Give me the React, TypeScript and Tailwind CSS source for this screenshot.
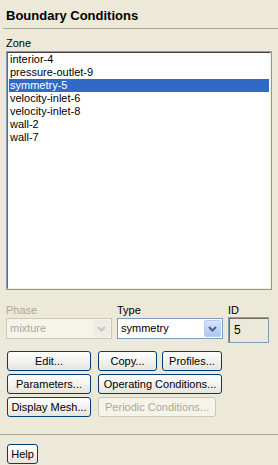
const zones = [
  "interior-4",
  "pressure-outlet-9",
  "symmetry-5",
  "velocity-inlet-6",
  "velocity-inlet-8",
  "wall-2",
  "wall-7",
];

function Chevron({ color }: { color: string }) {
  return (
    <svg width="9" height="6" viewBox="0 0 9 6">
      <path d="M1 1 L4.5 4.5 L8 1" fill="none" stroke={color} strokeWidth="2" />
    </svg>
  );
}

function Btn({
  label,
  w,
  disabled,
}: {
  label: string;
  w: string;
  disabled?: boolean;
}) {
  return (
    <div
      className={`${w} flex h-[20px] items-center justify-center rounded-[3px] border text-[11px] leading-none ${
        disabled
          ? "border-[#C9C7BA] bg-[#F5F4EA] text-[#ACA899]"
          : "border-[#003C74] bg-gradient-to-b from-white to-[#E6E5DE] text-black"
      }`}
    >
      {label}
    </div>
  );
}

export default function App() {
  return (
    <div
      className="flex h-[465px] w-[278px] flex-col overflow-hidden bg-[#ECE9D8] text-[11px] text-black"
      style={{ fontFamily: '"Liberation Sans", Arial, sans-serif' }}
    >
      <div className="ml-[3px] h-[29px] border-b border-[#ACA899] pl-[3px] pt-[8px] text-[13px] font-bold leading-[16px]">
        Boundary Conditions
      </div>

      <div className="ml-[6px] mt-[8px] leading-[13px]">Zone</div>

      <div className="ml-[6px] mt-[1px] h-[239px] w-[266px] border border-[#7F9DB9]">
        <div className="h-full border-b border-l border-r border-t border-b-[#F1EFE2] border-l-[#716F64] border-r-[#F1EFE2] border-t-[#404040] bg-white pl-[1px] pr-[1px]">
          {zones.map((z) => (
            <div
              key={z}
              className={`h-[13px] pl-[1px] leading-[13px] ${
                z === "symmetry-5" ? "bg-[#316AC5] text-white" : ""
              }`}
            >
              {z}
            </div>
          ))}
        </div>
      </div>

      <div className="ml-[6px] mt-[14px] flex items-start">
        <div className="w-[106px]">
          <div className="leading-[13px] text-[#ACA899]">Phase</div>
          <div className="mt-[1px] flex h-[21px] items-center border border-[#C9C7BA] bg-[#F5F4EA] pl-[3px] pr-[1px] text-[#ACA899]">
            <span className="flex-1">mixture</span>
            <div className="flex h-[17px] w-[17px] items-center justify-center rounded-[2px] bg-[#EEEDE5]">
              <Chevron color="#C9C7BA" />
            </div>
          </div>
        </div>
        <div className="ml-[5px] w-[106px]">
          <div className="leading-[13px]">Type</div>
          <div className="mt-[1px] flex h-[21px] items-center border border-[#7F9DB9] bg-white pl-[3px] pr-[1px]">
            <span className="flex-1">symmetry</span>
            <div className="flex h-[17px] w-[17px] items-center justify-center rounded-[2px] border border-[#B9CCF5] bg-gradient-to-b from-[#D7E3FD] to-[#AFC4F3]">
              <Chevron color="#4D6185" />
            </div>
          </div>
        </div>
        <div className="ml-[5px] w-[41px]">
          <div className="leading-[13px]">ID</div>
          <div className="h-[26px] border border-[#7F9DB9]">
            <div className="h-full border-l border-t border-[#716F64] pl-[4px] pt-[4px] text-[12px] leading-[14px]">
              5
            </div>
          </div>
        </div>
      </div>

      <div className="ml-[7px] mt-[8px] flex flex-col gap-[3px]">
        <div className="flex gap-[7px]">
          <Btn label="Edit..." w="w-[84px]" />
          <div className="flex gap-[5px]">
            <Btn label="Copy..." w="w-[59px]" />
            <Btn label="Profiles..." w="w-[60px]" />
          </div>
        </div>
        <div className="flex gap-[7px]">
          <Btn label="Parameters..." w="w-[84px]" />
          <Btn label="Operating Conditions..." w="w-[124px]" />
        </div>
        <div className="flex gap-[7px]">
          <Btn label="Display Mesh..." w="w-[84px]" />
          <Btn label="Periodic Conditions..." w="w-[118px]" disabled />
        </div>
      </div>

      <div className="mt-[17px] border-t border-[#ACA899]" />

      <div className="ml-[7px] mt-[9px]">
        <Btn label="Help" w="w-[31px]" />
      </div>
    </div>
  );
}
